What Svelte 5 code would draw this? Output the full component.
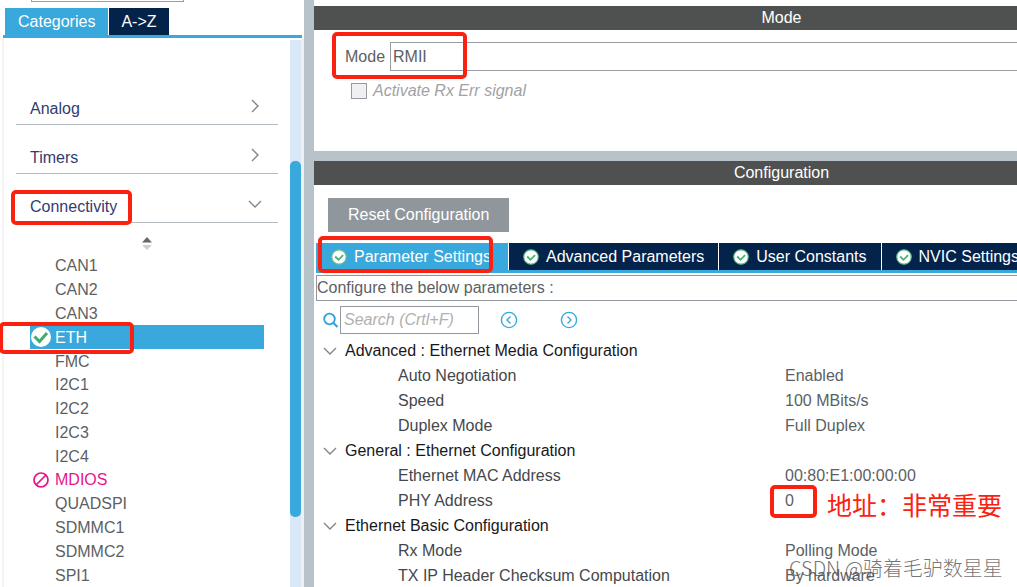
<script>
  let query = $state('');
  let mode = $state('RMII');
  let active = $state('Parameter Settings');

  const closed = ['Analog', 'Timers'];
  const peripherals = [
    'CAN1', 'CAN2', 'CAN3', 'ETH', 'FMC', 'I2C1', 'I2C2', 'I2C3', 'I2C4',
    'MDIOS', 'QUADSPI', 'SDMMC1', 'SDMMC2', 'SPI1'
  ];
  const tabs = ['Parameter Settings', 'Advanced Parameters', 'User Constants', 'NVIC Settings'];
  const groups = [
    {
      title: 'Advanced : Ethernet Media Configuration',
      rows: [['Auto Negotiation', 'Enabled'], ['Speed', '100 MBits/s'], ['Duplex Mode', 'Full Duplex']]
    },
    {
      title: 'General : Ethernet Configuration',
      rows: [['Ethernet MAC Address', '00:80:E1:00:00:00'], ['PHY Address', '0']]
    },
    {
      title: 'Ethernet Basic Configuration',
      rows: [['Rx Mode', 'Polling Mode'], ['TX IP Header Checksum Computation', 'By hardware']]
    }
  ];
</script>

{#snippet down()}
  <svg class="chev" width="14" height="8" viewBox="0 0 14 8" aria-hidden="true"><path d="M1 1l6 6 6-6" /></svg>
{/snippet}

<div class="app">
  <aside>
    <div class="finder"></div>
    <div class="side-tabs">
      <button class="on">Categories</button>
      <button>A-&gt;Z</button>
    </div>
    <div class="side-body">
      <nav>
        {#each closed as name}
          <button class="category">
            {name}
            <svg class="chev" width="8" height="14" viewBox="0 0 8 14" aria-hidden="true"><path d="M1 1l6 6-6 6" /></svg>
          </button>
        {/each}
        <button class="category open">Connectivity {@render down()}</button>
        <button class="sorter" aria-label="Sort">
          <svg width="10" height="14" viewBox="0 0 10 14"><path d="M0 5.500L5 0l5 5.500z" fill="#686868" /><path d="M0 8h10L5 13z" fill="#cfcfcf" /></svg>
        </button>
        <ul>
          {#each peripherals as name}
            <li>
              <button class:selected={name === 'ETH'} class:blocked={name === 'MDIOS'}>
                <span class="mark">
                  {#if name === 'ETH'}
                    <svg width="20" height="20" viewBox="0 0 20 20"><circle cx="10" cy="10" r="10" fill="#fff" /><path d="M3.500 9.500l5 5L16 6" fill="none" stroke="#3fae6c" stroke-width="3" /></svg>
                  {:else if name === 'MDIOS'}
                    <svg width="16" height="16" viewBox="0 0 16 16" fill="none" stroke="#e6148c" stroke-width="1.700"><circle cx="8" cy="8" r="7" /><path d="M3 13L13 3" /></svg>
                  {/if}
                </span>
                {name}
              </button>
            </li>
          {/each}
        </ul>
      </nav>
      <div class="scroll"><div class="thumb"></div></div>
    </div>
  </aside>

  <main>
    <section class="mode">
      <h2>Mode</h2>
      <div class="mode-row">
        <label for="mode">Mode</label>
        <select id="mode" bind:value={mode}><option>RMII</option></select>
      </div>
      <label class="err"><input type="checkbox" disabled />Activate Rx Err signal</label>
    </section>

    <section class="config">
      <h2>Configuration</h2>
      <button class="reset">Reset Configuration</button>
      <div class="tabs">
        {#each tabs as tab}
          <button class:on={active === tab} onclick={() => (active = tab)}>
            <svg width="16" height="16" viewBox="0 0 16 16"><circle cx="8" cy="8" r="7.200" fill="#fff" stroke="#63c08b" stroke-width="1.200" /><path d="M4.200 7.500l3.300 3.300 4.600-4.600" fill="none" stroke="#48b275" stroke-width="1.800" /></svg>
            {tab}
          </button>
        {/each}
      </div>
      <p class="hint">Configure the below parameters :</p>
      <div class="search">
        <svg width="16" height="16" viewBox="0 0 16 16" fill="none" stroke="#2fa3dc" stroke-width="1.800"><circle cx="6.500" cy="7" r="5.300" /><path d="M10.500 11L14.500 15" stroke-width="2.200" /></svg>
        <input type="text" aria-label="Search" placeholder="Search (Crtl+F)" bind:value={query} />
        <button aria-label="Previous"><svg width="18" height="18" viewBox="0 0 18 18"><circle cx="9" cy="9" r="7.600" /><path d="M10.500 5.500L7 9l3.500 3.500" /></svg></button>
        <button aria-label="Next"><svg width="18" height="18" viewBox="0 0 18 18"><circle cx="9" cy="9" r="7.600" /><path d="M7.500 5.500L11 9l-3.500 3.500" /></svg></button>
      </div>
      <table>
        <colgroup><col class="names" /><col /></colgroup>
        {#each groups as group}
          <tbody>
            <tr><th colspan="2"><button>{@render down()}{group.title}</button></th></tr>
            {#each group.rows as [name, value]}
              <tr><td class="name">{name}</td><td>{value}</td></tr>
            {/each}
          </tbody>
        {/each}
      </table>
    </section>
  </main>

  <div class="box connectivity"></div>
  <div class="box eth"></div>
  <div class="box rmii"></div>
  <div class="box settings"></div>
  <div class="box phy"></div>
  <div class="note">地址：非常重要</div>
  <div class="credit">CSDN @骑着毛驴数星星</div>
</div>

<style>
  .app {
    position: relative;
    display: flex;
    height: 100vh;
    overflow: hidden;
    background: #fff;
    color: #5c5f63;
    font: 16px/24px "Liberation Sans", "Noto Sans CJK SC", sans-serif;
  }
  button, input, select {
    margin: 0;
    padding: 0;
    border: 0;
    border-radius: 0;
    background: none;
    color: inherit;
    font: inherit;
    appearance: none;
  }
  svg { flex: none; display: block; }
  .chev { fill: none; stroke: #858585; stroke-width: 1.4; }

  aside {
    flex: none;
    display: flex;
    flex-direction: column;
    width: 304px;
    border-right: 10px solid #b8c3c9;
  }
  .finder {
    height: 1px;
    width: 151px;
    margin-left: 31px;
    border: 1px solid #9a9ea3;
    border-top: 0;
  }
  .side-tabs {
    display: flex;
    gap: 1px;
    margin: 6px 2px 0 3px;
    padding-left: 2px;
    border-bottom: 3px solid #39a8dc;
  }
  .side-tabs button {
    height: 27px;
    padding: 0 12px;
    background: #03234b;
    color: #fff;
  }
  .side-tabs button.on { padding: 0 13px; background: #39a8dc; }
  .side-body {
    flex: 1;
    display: flex;
    min-height: 0;
    margin-left: 2px;
    padding-right: 3px;
    border-left: 2px solid #f3f3f4;
    background: linear-gradient(to left, #eef0f4 3px, #fff 3px);
  }
  nav {
    flex: 1;
    display: flex;
    flex-direction: column;
    padding: 38px 12px 0;
  }
  .category {
    flex: none;
    display: flex;
    align-items: flex-end;
    justify-content: space-between;
    height: 49px;
    padding: 0 15px 3px 14px;
    border-bottom: 1px solid #b4bcc2;
    color: #323c70;
    line-height: 24px;
  }
  .category .chev { width: 16px; margin-bottom: 8px; }
  .category.open .chev { margin-bottom: 11px; }
  .sorter { align-self: center; padding: 14px 0 3px; }
  ul {
    flex: 1;
    display: grid;
    grid-auto-rows: 1fr;
    margin: 0 14px;
    padding: 0;
    list-style: none;
    line-height: 23px;
  }
  li { display: flex; }
  li button {
    flex: 1;
    display: flex;
    align-items: center;
    gap: 4px;
  }
  .mark { display: flex; justify-content: center; width: 21px; }
  .selected { background: #39a8dc; color: #fff; }
  .blocked { color: #e6148c; }
  .scroll { width: 11px; margin-top: 2px; background: #d9e8f6; }
  .thumb {
    height: 65%;
    margin-top: 121px;
    border-radius: 5px;
    background: #39a8dc;
  }

  main { flex: 1; min-width: 0; overflow: hidden; }
  h2 {
    margin: 0;
    padding-left: 33%;
    background: #4f5150;
    color: #fff;
    font-size: 16px;
    font-weight: 400;
    line-height: 24px;
    text-align: center;
  }
  .mode { height: 145px; padding-top: 6px; border-bottom: 10px solid #b8c3c9; }
  .mode-row { display: flex; align-items: center; gap: 5px; padding: 12px 0 0 31px; }
  select {
    flex: 1;
    height: 29px;
    padding-left: 2px;
    border: 1px solid #999da3;
    border-right: 0;
  }
  .err {
    display: flex;
    align-items: center;
    gap: 6px;
    padding: 8px 0 0 37px;
    color: #a0a2a5;
    font-style: italic;
  }
  .err input { width: 16px; height: 16px; border: 1px solid #969ba3; background: #f0f0f3; }

  .reset {
    display: block;
    height: 34px;
    margin: 13px 0 11px 14px;
    padding: 0 20px;
    background: #8f979c;
    color: #fff;
  }
  .tabs { display: flex; gap: 1px; margin-left: 2px; border-bottom: 3px solid #39a8dc; }
  .tabs button {
    flex: none;
    display: flex;
    align-items: center;
    gap: 7px;
    height: 27px;
    padding: 0 14px;
    background: #03234b;
    color: #fff;
    white-space: nowrap;
  }
  .tabs button.on { padding: 0 17px 0 15px; background: #39a8dc; }
  .hint {
    margin: 2px 0 0 2px;
    border: 1px solid #92989d;
    border-right: 0;
    line-height: 24px;
  }
  .search { display: flex; align-items: center; height: 37px; padding-left: 9px; }
  .search input {
    width: 139px;
    height: 28px;
    box-sizing: border-box;
    margin: 0 21px 0 1px;
    padding: 0 3px;
    border: 1px solid #92989d;
  }
  .search input::placeholder { color: #b0b0b0; font-style: italic; opacity: 1; }
  .search button { margin-right: 42px; }
  .search button svg { fill: none; stroke: #36a8de; stroke-width: 1.4; }
  table { width: 100%; table-layout: fixed; border-collapse: collapse; line-height: 25px; }
  .names { width: 67%; }
  td, th { height: 25px; padding: 0; font-weight: 400; text-align: left; white-space: nowrap; }
  th button { display: flex; align-items: center; gap: 8px; padding-left: 9px; color: #17181c; }
  .name { padding-left: 84px; color: #45474c; }

  .box { position: absolute; box-sizing: border-box; border: 4px solid #fb2110; border-radius: 5px; pointer-events: none; }
  .connectivity { left: 11px; top: 190px; width: 121px; height: 35px; }
  .eth { left: -1px; top: 322px; width: 135px; height: 32px; }
  .rmii { left: 332px; top: 32px; width: 135px; height: 47px; }
  .settings { left: 318px; top: 236px; width: 175px; height: 37px; }
  .phy { left: 770px; top: 485px; width: 47px; height: 33px; }
  .note { position: absolute; left: 827px; top: 488px; color: #fb2110; font-size: 25px; line-height: 36px; }
  .credit { position: absolute; left: 789px; top: 554px; color: rgb(80 80 80 / 80%); font-family: "Noto Sans CJK SC", sans-serif; font-size: 20px; font-weight: 300; line-height: 28px; }
</style>
